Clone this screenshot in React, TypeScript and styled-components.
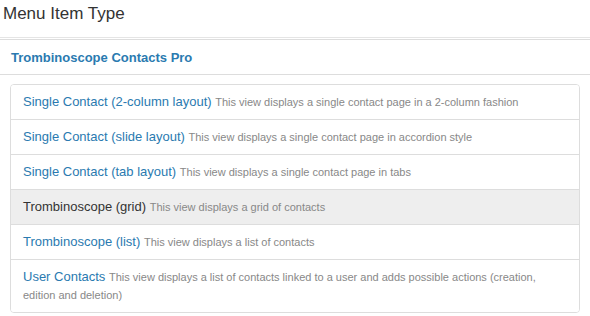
import styled, { createGlobalStyle } from 'styled-components';

const GlobalStyle = createGlobalStyle`
    body {
        margin: 0;
        background: #fff;
        font-family: "Liberation Sans", Arial, sans-serif;
        color: #333;
    }
`;

const Page = styled.div`
    width: 590px;
    height: 316px;
    overflow: hidden;
`;

const Header = styled.div`
    height: 38px;
    padding: 0 3px;
    border-bottom: 1px solid #e5e5e5;
    box-sizing: border-box;
`;

const Title = styled.h3`
    margin: 0;
    padding-top: 2px;
    font-size: 17px;
    font-weight: normal;
    line-height: 24px;
    color: #333;
`;

const Body = styled.div`
    padding-top: 1px;
`;

const GroupHeading = styled.div`
    height: 34px;
    border-top: 1px solid #ddd;
    border-bottom: 1px solid #ddd;
    display: flex;
    align-items: center;
    padding: 0 11px;
    font-size: 13px;
    font-weight: bold;
    color: #2a7ab0;
`;

const ListGroup = styled.div`
    margin: 9px 10px 0;
    border: 1px solid #ddd;
    border-radius: 4px;
    overflow: hidden;
`;

const Item = styled.div<{ $active?: boolean }>`
    padding: 8px 12px;
    border-top: 1px solid #ddd;
    font-size: 13px;
    line-height: 18px;
    background: ${(p) => (p.$active ? '#eee' : '#fff')};
    &:first-child {
        border-top: none;
    }
`;

const ItemTitle = styled.span<{ $active?: boolean }>`
    font-size: 13px;
    line-height: 18px;
    color: ${(p) => (p.$active ? '#333' : '#2a7ab0')};
`;

const ItemDesc = styled.small`
    font-size: 11px;
    line-height: 18px;
    color: #888;
`;

const items = [
    { title: 'Single Contact (2-column layout)', desc: 'This view displays a single contact page in a 2-column fashion' },
    { title: 'Single Contact (slide layout)', desc: 'This view displays a single contact page in accordion style' },
    { title: 'Single Contact (tab layout)', desc: 'This view displays a single contact page in tabs' },
    { title: 'Trombinoscope (grid)', desc: 'This view displays a grid of contacts', active: true },
    { title: 'Trombinoscope (list)', desc: 'This view displays a list of contacts' },
    { title: 'User Contacts', desc: 'This view displays a list of contacts linked to a user and adds possible actions (creation, edition and deletion)' },
];

const App = () => (
    <Page>
        <GlobalStyle />
        <Header>
            <Title>Menu Item Type</Title>
        </Header>
        <Body>
            <GroupHeading>Trombinoscope Contacts Pro</GroupHeading>
            <ListGroup>
                {items.map((it) => (
                    <Item key={it.title} $active={it.active}>
                        <ItemTitle $active={it.active}>{it.title}</ItemTitle> <ItemDesc>{it.desc}</ItemDesc>
                    </Item>
                ))}
            </ListGroup>
        </Body>
    </Page>
);

export default App;
